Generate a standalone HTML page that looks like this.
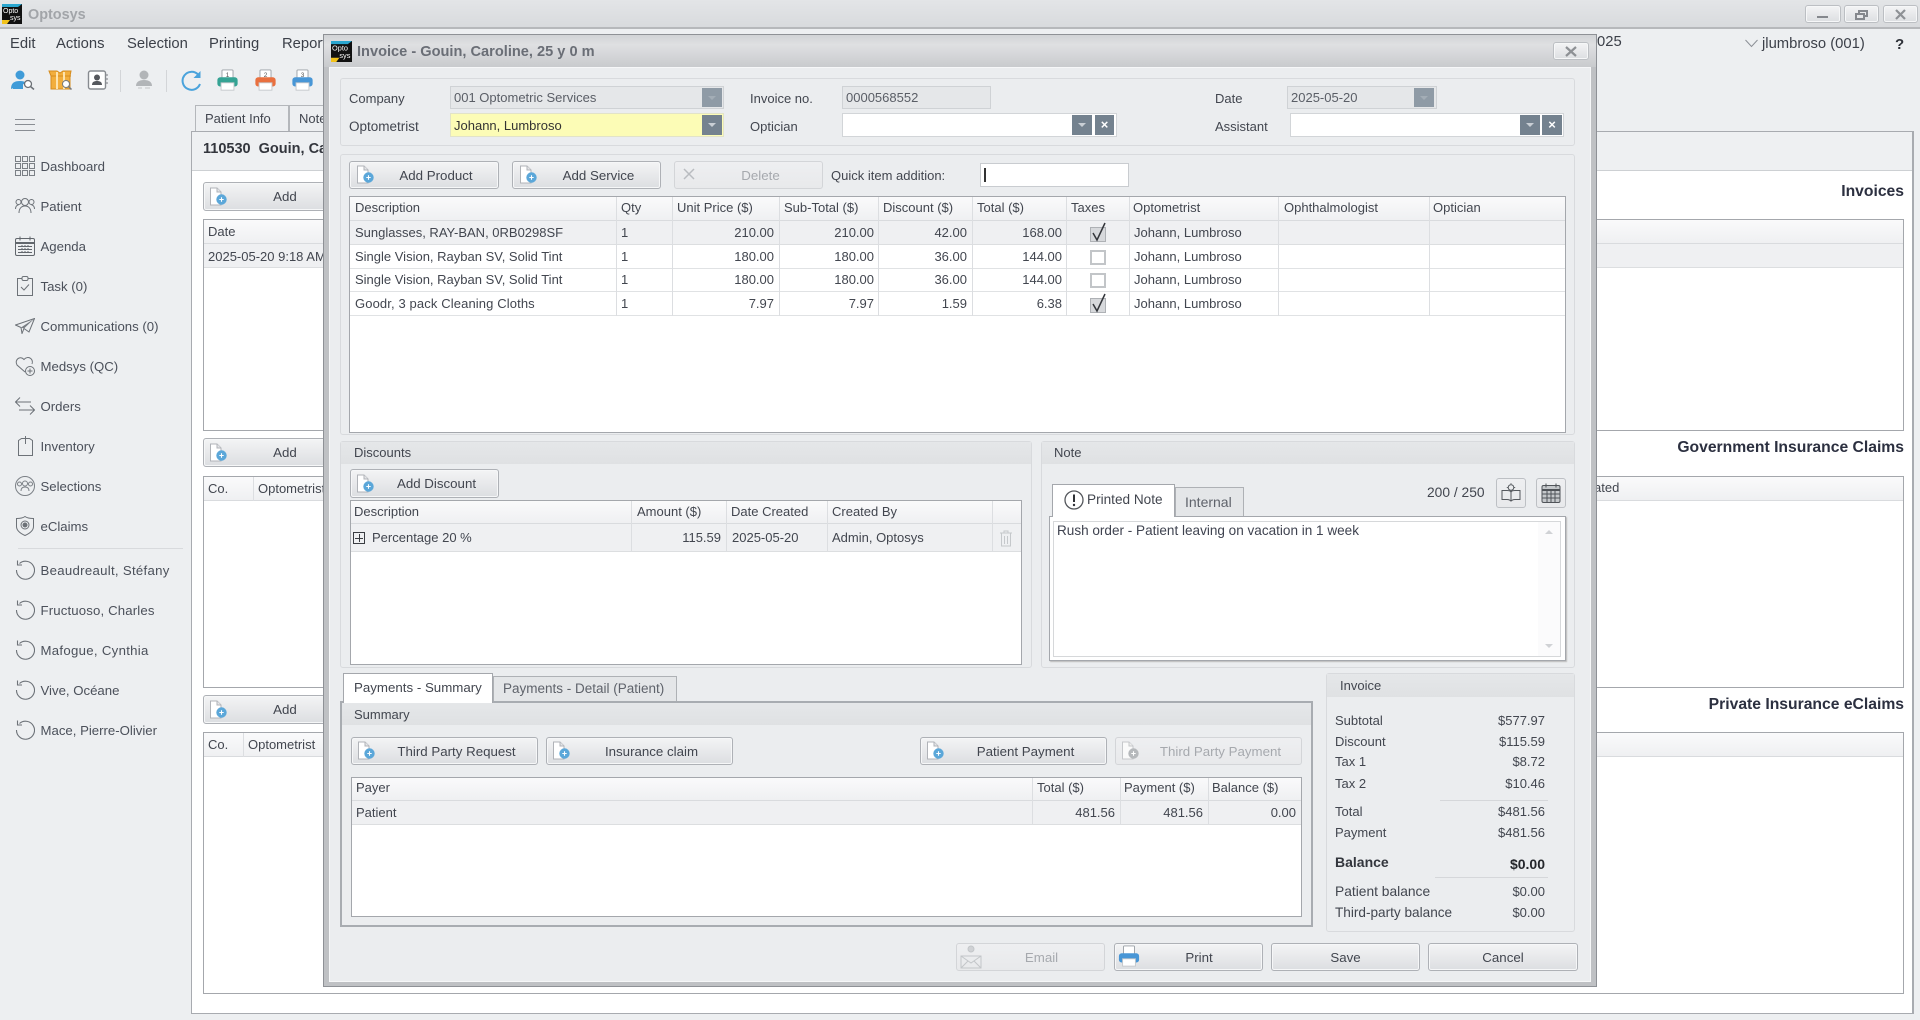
<!DOCTYPE html>
<html><head><meta charset="utf-8"><title>Optosys</title>
<style>
html,body{margin:0;padding:0;background:#edeff1}
#w{position:relative;width:1920px;height:1020px;overflow:hidden;background:#edeff1;font-family:"Liberation Sans",sans-serif;font-size:13px;color:#42464f;filter:blur(.35px)}
#w div,#w svg{position:absolute;box-sizing:border-box}
.t{white-space:nowrap;line-height:16px;height:16px}
.m{font-size:14.8px;color:#3c4049}
.n{font-size:13.2px;color:#4b505a;left:40.5px}
.b{background:linear-gradient(#f3f4f5,#e9eaec 45%,#dcdee1);border:1px solid #aeb1b6;border-radius:3px;box-shadow:inset 0 0 0 1px #f6f7f8;text-align:center;line-height:27px;font-size:13.3px;color:#42464f;padding-left:24px;white-space:nowrap}
.d{background:linear-gradient(#eeeff1,#e8e9eb);border:1px solid #d3d5d8;border-radius:3px;color:#a6a9ae;text-align:center;line-height:27px;font-size:13.3px;padding-left:24px;white-space:nowrap}
.wb{border-color:#bcbfc3;padding:0}
.g{background:#fff;border:1px solid #a4a7ac}
.h{background:linear-gradient(#fafafb,#eff0f2);border-bottom:1px solid #d9dbde}
.r{border-bottom:1px solid #e0e2e4;background:#fff}
.s{background:#eff0f2;border-bottom:1px solid #dcdee0}
.v{width:1px;background:#dcdee1}
.p{background:#ebedef;border:1px solid #d8dadd;border-radius:3px}
.k{background:linear-gradient(#e5e7e9,#dfe1e3)}
.f{background:#e5e7e9;border:1px solid #cfd2d5}
.w{background:#fff;border:1px solid #d2d5d8}
.q{background:#74828f}
.q2{background:#8f9ba6}
.lb{color:#42464f}
.x{color:#fff;font-size:13px;font-weight:bold;text-align:center;line-height:19px}
.ar{width:0;height:0;border-left:4px solid transparent;border-right:4px solid transparent;border-top:4px solid #c9cfd5}
.hd{font-size:15.7px;font-weight:bold;color:#2c3040;right:16px}
</style></head><body>
<svg width="0" height="0" style="position:absolute">
<defs>
<symbol id="add" viewBox="0 0 20 19"><path d="M2.500 1h6.500l4 4v13h-10.500z" fill="#fff" stroke="#b0b3b8"/><path d="M9 1v4h4" fill="#e4e5e7" stroke="#b0b3b8"/><circle cx="13.500" cy="12.500" r="5.200" fill="#5ba7d9"/><path d="M11.300 12.500h4.400M13.500 10.300v4.400" stroke="#fff" stroke-width="1.100"/></symbol>
<symbol id="addg" viewBox="0 0 20 19"><path d="M2.500 1h6.500l4 4v13h-10.500z" fill="#fafafa" stroke="#c6c8cb"/><path d="M9 1v4h4" fill="#eee" stroke="#c6c8cb"/><circle cx="13.500" cy="12.500" r="5.200" fill="#b5b8bb"/><path d="M11.300 12.500h4.400M13.500 10.300v4.400" stroke="#fff" stroke-width="1.100"/></symbol>
<symbol id="logo" viewBox="0 0 20 20"><rect width="20" height="20" fill="#111"/><path d="M0 0h20L16 3H0z" fill="#2aa6cf"/><path d="M0 16h8L5 20H0z" fill="#f2c21a"/><text x="1" y="9" font-size="7" fill="#fff" font-family="Liberation Sans">Opto</text><text x="8" y="16" font-size="7" fill="#fff" font-family="Liberation Sans">sys</text></symbol>
<symbol id="rec" viewBox="0 0 20 20"><path d="M4.500 3.500A9 9 0 1 1 1.500 10" fill="none" stroke="#6d7278" stroke-width="1.100"/><path d="M1.500 1.500v4.500h4.500" fill="none" stroke="#6d7278" stroke-width="1.100" transform="translate(1 -1)"/></symbol>
<symbol id="pr" viewBox="0 0 24 25"><rect x="6" y="1" width="12" height="10" rx="1" fill="#fff" stroke="#9aa0a6"/><rect x="1" y="9" width="22" height="10" rx="3" fill="currentColor"/><rect x="5" y="15" width="14" height="8" fill="#fff" stroke="#c5c8cb"/></symbol>
</defs>
</svg>
<div id="w">
<!-- title bar -->
<div style="left:0;top:0;width:1920px;height:29px;background:linear-gradient(#e3e5e7,#d8dadd);border-bottom:2px solid #b6b8bb"></div>
<svg style="left:2px;top:4px" width="20" height="20"><use href="#logo"/></svg>
<div class="t" style="left:28px;top:7px;font-weight:bold;font-size:14.4px;color:#a2a5a9">Optosys</div>
<div class="b wb" style="left:1805px;top:5px;width:36px;height:18px"></div><div style="left:1817px;top:16px;width:11px;height:2px;background:#85888d"></div>
<div class="b wb" style="left:1844px;top:5px;width:35px;height:18px"></div><div style="left:1858px;top:10px;width:10px;height:7px;border:2px solid #85888d"></div><div style="left:1855px;top:13px;width:10px;height:7px;border:2px solid #85888d;background:#e6e7e9"></div>
<div class="b wb" style="left:1883px;top:5px;width:35px;height:18px"></div>
<svg style="left:1895px;top:9px" width="11" height="11"><path d="M1 1l9 9M10 1l-9 9" stroke="#8e9195" stroke-width="2.200"/></svg>

<!-- menu -->
<div class="t m" style="left:10px;top:36px">Edit</div>
<div class="t m" style="left:56px;top:36px">Actions</div>
<div class="t m" style="left:127px;top:36px">Selection</div>
<div class="t m" style="left:209px;top:36px">Printing</div>
<div class="t m" style="left:282px;top:36px">Reports</div>
<div class="t m" style="left:1597px;top:34px">025</div>
<svg style="left:1745px;top:39px" width="13" height="9"><path d="M.5 1l6 6.500 6-6.500" fill="none" stroke="#8c9096"/></svg>
<div class="t m" style="left:1762px;top:36px">jlumbroso (001)</div>
<div class="t" style="left:1895px;top:37px;font-size:15px;font-weight:bold;color:#2e3138">?</div>

<!-- toolbar icons -->
<svg style="left:11px;top:70px" width="24" height="20" viewBox="0 0 24 20"><circle cx="9" cy="5" r="4.500" fill="#3f9bd8"/><path d="M0 19c0-6 3-8 9-8 3 0 5 .6 6.500 2" fill="#3f9bd8"/><path d="M2 19h10v-5H2z" fill="#3f9bd8"/><circle cx="17" cy="14" r="3.500" fill="#fff" stroke="#6b7076" stroke-width="1.300"/><path d="M19.500 16.500l3.500 3" stroke="#6b7076" stroke-width="1.500"/></svg>
<svg style="left:48px;top:70px" width="25" height="20" viewBox="0 0 25 20"><path d="M1 1h8l3 2 3-2h8l-1 5v13H3V6z" fill="#f2ae3c" stroke="#d58c1e"/><path d="M3 6h20" stroke="#d58c1e"/><path d="M9 2v17M16 2v17" stroke="#fde3ad" stroke-width="2"/><circle cx="18" cy="14" r="3.500" fill="#fff" stroke="#77797c"/><path d="M20.500 16.500l3 3" stroke="#77797c" stroke-width="1.500"/></svg>
<svg style="left:87px;top:70px" width="21" height="20" viewBox="0 0 21 20"><rect x="1.500" y="1" width="17" height="18" rx="2" fill="#fff" stroke="#878b90" stroke-width="1.400"/><circle cx="10" cy="7.500" r="3" fill="#55585d"/><path d="M5 15c0-3 2-4 5-4s5 1 5 4z" fill="#55585d"/><path d="M20 4v12" stroke="#9ea1a5" stroke-dasharray="2 2" stroke-width="1.500"/></svg>
<div class="v" style="left:120px;top:70px;height:22px;background:#d3d5d8"></div>
<svg style="left:135px;top:70px" width="18" height="20" viewBox="0 0 18 20"><circle cx="9" cy="5" r="4.500" fill="#b2b5b8"/><path d="M1 16c0-4 3-6 8-6s8 2 8 6z" fill="#b2b5b8"/><path d="M3 18h4M10 18h5" stroke="#c2c4c7"/></svg>
<div class="v" style="left:166px;top:70px;height:22px;background:#d3d5d8"></div>
<svg style="left:180px;top:70px" width="22" height="21" viewBox="0 0 22 21"><path d="M18 4.500A9 9 0 1 0 20 14" fill="none" stroke="#4aa3dc" stroke-width="2"/><path d="M20.500 1v7h-7z" fill="#4aa3dc"/></svg>
<svg style="left:216px;top:69px;color:#35a394" width="23" height="23"><use href="#pr"/><text x="11.500" y="8" font-size="6.500" text-anchor="middle" fill="#555" font-family="Liberation Sans">1</text></svg>
<svg style="left:254px;top:69px;color:#e9703f" width="23" height="23"><use href="#pr"/><text x="11.500" y="8" font-size="6.500" text-anchor="middle" fill="#555" font-family="Liberation Sans">2</text></svg>
<svg style="left:291px;top:69px;color:#4896d6" width="23" height="23"><use href="#pr"/><text x="11.500" y="8" font-size="6.500" text-anchor="middle" fill="#555" font-family="Liberation Sans">3</text></svg>

<!-- sidebar -->
<div style="left:15px;top:119px;width:20px;height:1px;background:#8a8e94"></div><div style="left:15px;top:124px;width:20px;height:1px;background:#8a8e94"></div><div style="left:15px;top:130px;width:20px;height:1px;background:#8a8e94"></div>
<svg style="left:15px;top:156px" width="20" height="20" viewBox="0 0 20 20" fill="none" stroke="#7b8086"><rect x=".5" y=".5" width="5" height="5"/><rect x="7.500" y=".5" width="5" height="5"/><rect x="14.500" y=".5" width="5" height="5"/><rect x=".5" y="7.500" width="5" height="5"/><rect x="7.500" y="7.500" width="5" height="5"/><rect x="14.500" y="7.500" width="5" height="5"/><rect x=".5" y="14.500" width="5" height="5"/><rect x="7.500" y="14.500" width="5" height="5"/><rect x="14.500" y="14.500" width="5" height="5"/></svg>
<div class="t n" style="top:159px">Dashboard</div>
<svg style="left:15px;top:197px" width="20" height="18" viewBox="0 0 20 18" fill="none" stroke="#6d7278"><circle cx="10" cy="5" r="3.500"/><circle cx="3.500" cy="5" r="2.500"/><circle cx="16.500" cy="5" r="2.500"/><path d="M4 16c0-4 2-7 6-7s6 3 6 7M.5 12c0-2 1-4 3-4M19.500 12c0-2-1-4-3-4"/></svg>
<div class="t n" style="top:199px">Patient</div>
<svg style="left:15px;top:236px" width="20" height="20" viewBox="0 0 20 20" fill="none" stroke="#61666c"><rect x=".5" y="2.500" width="19" height="17" rx="1.500"/><path d="M.5 7h19" stroke-width="2"/><path d="M5 .5v4M15 .5v4M3 10.500h14M3 13.500h14M3 16.500h14" /><path d="M7 9v9M10 9v9M13 9v9" stroke-dasharray="2 1"/></svg>
<div class="t n" style="top:239px">Agenda</div>
<svg style="left:17px;top:276px" width="16" height="20" viewBox="0 0 16 20" fill="none" stroke="#6d7278"><path d="M5 2.500H.5v17h15v-17H11"/><rect x="5" y=".5" width="6" height="4" rx="1.500"/><path d="M4 11l3 3 5-5.500"/></svg>
<div class="t n" style="top:279px">Task (0)</div>
<svg style="left:15px;top:318px" width="20" height="16" viewBox="0 0 20 16" fill="#787d83"><path d="M.5 7L19.500.5 14 14 9 10.500 7 15.500 6 9.500z" fill="none" stroke="#6d7278"/><path d="M6 9.500L19.500.5 9 10.500z"/></svg>
<div class="t n" style="top:319px">Communications (0)</div>
<svg style="left:15px;top:356px" width="20" height="20" viewBox="0 0 20 20" fill="none" stroke="#6d7278"><path d="M10 16L2 9C-1 4 5-1 9 3.500 13-1 19 3 17 8"/><circle cx="15" cy="15" r="4.500" fill="#edeff1"/><path d="M12.500 15h5M15 12.500v5"/></svg>
<div class="t n" style="top:359px">Medsys (QC)</div>
<svg style="left:15px;top:397px" width="20" height="18" viewBox="0 0 20 18" fill="none" stroke="#6d7278"><path d="M5 .5L.5 5 5 9.500M1 5h15M15 8.500l4.500 4.500-4.500 4.500M19 13H4"/></svg>
<div class="t n" style="top:399px">Orders</div>
<svg style="left:18px;top:436px" width="15" height="20" viewBox="0 0 15 20" fill="none" stroke="#6d7278"><path d="M.5 4.500l3-2h8l3 2v15H.5z"/><path d="M7.500 0v8" /></svg>
<div class="t n" style="top:439px">Inventory</div>
<svg style="left:15px;top:476px" width="20" height="20" viewBox="0 0 20 20" fill="none" stroke="#7b8086"><circle cx="10" cy="10" r="9.500"/><circle cx="10" cy="7.500" r="2.500"/><circle cx="4.500" cy="8" r="2"/><circle cx="15.500" cy="8" r="2"/><path d="M6 15c0-3 2-4 4-4s4 1 4 4"/></svg>
<div class="t n" style="top:479px">Selections</div>
<svg style="left:16px;top:516px" width="18" height="20" viewBox="0 0 18 20" fill="none" stroke="#6d7278"><path d="M9 .5c2 1.500 5 2 8.500 2v8c0 4-4 7-8.500 9-4.500-2-8.500-5-8.500-9v-8C4 2.500 7 2 9 .5z"/><circle cx="9" cy="9" r="4"/><circle cx="9" cy="9" r="2" fill="#6d7278"/></svg>
<div class="t n" style="top:519px">eClaims</div>
<div style="left:18px;top:548px;width:165px;height:1px;background:#d8dadd"></div>
<svg style="left:15px;top:560px" width="20" height="20"><use href="#rec"/></svg><div class="t n" style="top:563px;letter-spacing:.3px">Beaudreault, Stéfany</div>
<svg style="left:15px;top:600px" width="20" height="20"><use href="#rec"/></svg><div class="t n" style="top:603px;letter-spacing:.15px">Fructuoso, Charles</div>
<svg style="left:15px;top:640px" width="20" height="20"><use href="#rec"/></svg><div class="t n" style="top:643px;letter-spacing:.3px">Mafogue, Cynthia</div>
<svg style="left:15px;top:680px" width="20" height="20"><use href="#rec"/></svg><div class="t n" style="top:683px">Vive, Océane</div>
<svg style="left:15px;top:720px" width="20" height="20"><use href="#rec"/></svg><div class="t n" style="top:723px">Mace, Pierre-Olivier</div>

<!-- background patient panel -->
<div style="left:195px;top:105px;width:94px;height:26px;background:#edeff1;border:1px solid #b4b7bb;border-bottom:none"></div>
<div class="t lb" style="left:205px;top:111px">Patient Info</div>
<div style="left:289px;top:105px;width:60px;height:26px;background:#edeff1;border:1px solid #b4b7bb;border-bottom:none"></div>
<div class="t lb" style="left:299px;top:111px">Notes</div>
<div style="left:191px;top:131px;width:1723px;height:883px;background:#fff;border:1px solid #a8abb0;border-right-width:2px"></div>
<div style="left:192px;top:132px;width:1720px;height:39px;background:#eef0f2;border-bottom:1px solid #cdd0d3"></div>
<div class="t" style="left:203px;top:141px;font-size:14.5px;font-weight:bold;color:#33363d">110530&nbsp; Gouin, Caroline</div>
<div class="t hd" style="top:184px">Invoices</div>
<div class="t hd" style="top:440px">Government Insurance Claims</div>
<div class="t hd" style="top:697px">Private Insurance eClaims</div>

<div class="b" style="left:203px;top:182px;width:140px;height:29px">Add</div>
<svg style="left:208px;top:187px" width="20" height="19"><use href="#add"/></svg>
<div class="g" style="left:203px;top:219px;width:1701px;height:212px"></div>
<div class="h" style="left:204px;top:220px;width:1699px;height:24px"></div>
<div class="s" style="left:204px;top:244px;width:1699px;height:24px"></div>
<div class="t lb" style="left:208px;top:224px">Date</div>
<div class="t lb" style="left:208px;top:249px">2025-05-20 9:18 AM</div>

<div class="b" style="left:203px;top:438px;width:140px;height:29px">Add</div>
<svg style="left:208px;top:443px" width="20" height="19"><use href="#add"/></svg>
<div class="g" style="left:203px;top:476px;width:1701px;height:212px"></div>
<div class="h" style="left:204px;top:477px;width:1699px;height:24px"></div>
<div class="v" style="left:253px;top:477px;height:24px"></div>
<div class="t lb" style="left:208px;top:481px">Co.</div>
<div class="t lb" style="left:258px;top:481px">Optometrist</div>
<div class="t lb" style="left:1542px;top:480px">Date Created</div>

<div class="b" style="left:203px;top:695px;width:140px;height:29px">Add</div>
<svg style="left:208px;top:700px" width="20" height="19"><use href="#add"/></svg>
<div class="g" style="left:203px;top:732px;width:1701px;height:262px"></div>
<div class="h" style="left:204px;top:733px;width:1699px;height:24px"></div>
<div class="v" style="left:243px;top:733px;height:24px"></div>
<div class="t lb" style="left:208px;top:737px">Co.</div>
<div class="t lb" style="left:248px;top:737px">Optometrist</div>

<!-- DIALOG -->
<div style="left:323px;top:34px;width:1274px;height:953px;background:#bfc1c4;border:1px solid #8e9196"></div>
<div style="left:324px;top:35px;width:1272px;height:32px;background:linear-gradient(#d1d3d6,#dfe0e2 30%,#c8cacd)"></div>
<div style="left:329px;top:67px;width:1262px;height:915px;background:#ebedef;border:1px solid #f6f7f8"></div>
<svg style="left:331px;top:41px" width="21" height="21"><use href="#logo"/></svg>
<div class="t" style="left:357px;top:44px;font-size:14.6px;font-weight:bold;color:#6a6e76">Invoice - Gouin, Caroline, 25 y 0 m</div>
<div class="b wb" style="left:1553px;top:42px;width:36px;height:18px"></div>
<svg style="left:1565px;top:46px" width="12" height="11"><path d="M1 1l10 9M11 1l-10 9" stroke="#8e9195" stroke-width="2.200"/></svg>

<!-- top group -->
<div class="p" style="left:340px;top:78px;width:1235px;height:68px"></div>
<div class="t lb" style="left:349px;top:91px">Company</div>
<div class="t lb" style="left:349px;top:119px;font-size:13.5px">Optometrist</div>
<div class="f" style="left:450px;top:86px;width:274px;height:23px"></div>
<div class="t" style="left:454px;top:90px;color:#5a5e66">001 Optometric Services</div>
<div class="q2" style="left:702px;top:88px;width:20px;height:19px"></div>
<div class="ar" style="left:708px;top:96px;border-top-color:#a3adb6"></div>
<div style="left:450px;top:113px;width:274px;height:24px;background:#fcfcb6;border:1px solid #e2e3c8"></div>
<div class="t" style="left:454px;top:118px;color:#333">Johann, Lumbroso</div>
<div class="q" style="left:702px;top:115px;width:20px;height:20px"></div>
<div class="ar" style="left:708px;top:123px"></div>

<div class="t lb" style="left:750px;top:91px">Invoice no.</div>
<div class="t lb" style="left:750px;top:119px">Optician</div>
<div class="f" style="left:842px;top:86px;width:149px;height:23px"></div>
<div class="t" style="left:846px;top:90px;color:#5a5e66">0000568552</div>
<div class="w" style="left:842px;top:113px;width:275px;height:24px"></div>
<div class="q" style="left:1072px;top:115px;width:20px;height:20px"></div><div class="ar" style="left:1078px;top:123px"></div>
<div class="q x" style="left:1095px;top:115px;width:19px;height:20px">×</div>

<div class="t lb" style="left:1215px;top:91px">Date</div>
<div class="t lb" style="left:1215px;top:119px">Assistant</div>
<div class="f" style="left:1287px;top:86px;width:150px;height:23px"></div>
<div class="t" style="left:1291px;top:90px;color:#5a5e66">2025-05-20</div>
<div class="q2" style="left:1414px;top:88px;width:20px;height:19px"></div><div class="ar" style="left:1420px;top:96px;border-top-color:#a3adb6"></div>
<div class="w" style="left:1290px;top:113px;width:274px;height:24px"></div>
<div class="q" style="left:1520px;top:115px;width:20px;height:20px"></div><div class="ar" style="left:1526px;top:123px"></div>
<div class="q x" style="left:1542px;top:115px;width:20px;height:20px">×</div>

<!-- items group -->
<div class="p" style="left:340px;top:154px;width:1235px;height:281px"></div>
<div class="b" style="left:349px;top:161px;width:150px;height:28px">Add Product</div>
<svg style="left:355px;top:165px" width="20" height="19"><use href="#add"/></svg>
<div class="b" style="left:512px;top:161px;width:149px;height:28px">Add Service</div>
<svg style="left:518px;top:165px" width="20" height="19"><use href="#add"/></svg>
<div class="d" style="left:674px;top:161px;width:149px;height:28px">Delete</div>
<svg style="left:683px;top:168px" width="12" height="12"><path d="M1 1l10 10M11 1L1 11" stroke="#b9bcc0" stroke-width="1.500"/></svg>
<div class="t lb" style="left:831px;top:168px">Quick item addition:</div>
<div class="w" style="left:980px;top:163px;width:149px;height:24px;border-color:#c9ccd0"></div>
<div style="left:984px;top:168px;width:2px;height:14px;background:#333"></div>

<div class="g" style="left:349px;top:196px;width:1217px;height:237px"></div>
<div class="h" style="left:350px;top:197px;width:1215px;height:24px"></div>
<div class="s" style="left:350px;top:221px;width:1215px;height:24px"></div>
<div class="r" style="left:350px;top:245px;width:1215px;height:24px"></div>
<div class="r" style="left:350px;top:269px;width:1215px;height:23px"></div>
<div class="r" style="left:350px;top:292px;width:1215px;height:24px"></div>
<div class="v" style="left:616px;top:197px;height:119px"></div>
<div class="v" style="left:672px;top:197px;height:119px"></div>
<div class="v" style="left:779px;top:197px;height:119px"></div>
<div class="v" style="left:878px;top:197px;height:119px"></div>
<div class="v" style="left:972px;top:197px;height:119px"></div>
<div class="v" style="left:1066px;top:197px;height:119px"></div>
<div class="v" style="left:1129px;top:197px;height:119px"></div>
<div class="v" style="left:1278px;top:197px;height:119px"></div>
<div class="v" style="left:1429px;top:197px;height:119px"></div>
<div class="t lb" style="left:355px;top:200px">Description</div>
<div class="t lb" style="left:621px;top:200px">Qty</div>
<div class="t lb" style="left:677px;top:200px">Unit Price ($)</div>
<div class="t lb" style="left:784px;top:200px">Sub-Total ($)</div>
<div class="t lb" style="left:883px;top:200px">Discount ($)</div>
<div class="t lb" style="left:977px;top:200px">Total ($)</div>
<div class="t lb" style="left:1071px;top:200px">Taxes</div>
<div class="t lb" style="left:1133px;top:200px">Optometrist</div>
<div class="t lb" style="left:1284px;top:200px">Ophthalmologist</div>
<div class="t lb" style="left:1433px;top:200px">Optician</div>

<div class="t lb" style="left:355px;top:225px">Sunglasses, RAY-BAN, 0RB0298SF</div><div class="t lb" style="left:621px;top:225px">1</div>
<div class="t lb" style="right:1146px;top:225px">210.00</div><div class="t lb" style="right:1046px;top:225px">210.00</div><div class="t lb" style="right:953px;top:225px">42.00</div><div class="t lb" style="right:858px;top:225px">168.00</div><div class="t lb" style="left:1134px;top:225px">Johann, Lumbroso</div>
<div class="t lb" style="left:355px;top:249px">Single Vision, Rayban SV, Solid Tint</div><div class="t lb" style="left:621px;top:249px">1</div>
<div class="t lb" style="right:1146px;top:249px">180.00</div><div class="t lb" style="right:1046px;top:249px">180.00</div><div class="t lb" style="right:953px;top:249px">36.00</div><div class="t lb" style="right:858px;top:249px">144.00</div><div class="t lb" style="left:1134px;top:249px">Johann, Lumbroso</div>
<div class="t lb" style="left:355px;top:272px">Single Vision, Rayban SV, Solid Tint</div><div class="t lb" style="left:621px;top:272px">1</div>
<div class="t lb" style="right:1146px;top:272px">180.00</div><div class="t lb" style="right:1046px;top:272px">180.00</div><div class="t lb" style="right:953px;top:272px">36.00</div><div class="t lb" style="right:858px;top:272px">144.00</div><div class="t lb" style="left:1134px;top:272px">Johann, Lumbroso</div>
<div class="t lb" style="left:355px;top:296px;letter-spacing:.12px">Goodr, 3 pack Cleaning Cloths</div><div class="t lb" style="left:621px;top:296px">1</div>
<div class="t lb" style="right:1146px;top:296px">7.97</div><div class="t lb" style="right:1046px;top:296px">7.97</div><div class="t lb" style="right:953px;top:296px">1.59</div><div class="t lb" style="right:858px;top:296px">6.38</div><div class="t lb" style="left:1134px;top:296px">Johann, Lumbroso</div>

<div style="left:1090px;top:227px;width:16px;height:15px;background:#d7d9dc;border:1px solid #aeb1b5"></div>
<svg style="left:1091px;top:222px" width="17" height="20"><path d="M2 11l4 7L14 1" fill="none" stroke="#33363b" stroke-width="1.500"/></svg>
<div style="left:1090px;top:250px;width:16px;height:15px;background:#fff;border:2px solid #c2c5c8"></div>
<div style="left:1090px;top:273px;width:16px;height:15px;background:#fff;border:2px solid #c2c5c8"></div>
<div style="left:1090px;top:298px;width:16px;height:15px;background:#d7d9dc;border:1px solid #aeb1b5"></div>
<svg style="left:1091px;top:293px" width="17" height="20"><path d="M2 11l4 7L14 1" fill="none" stroke="#33363b" stroke-width="1.500"/></svg>

<!-- Discounts -->
<div class="p" style="left:340px;top:441px;width:692px;height:227px"></div>
<div class="k" style="left:341px;top:442px;width:690px;height:22px"></div>
<div class="t lb" style="left:354px;top:445px">Discounts</div>
<div class="b" style="left:350px;top:469px;width:149px;height:29px">Add Discount</div>
<svg style="left:355px;top:474px" width="20" height="19"><use href="#add"/></svg>
<div class="g" style="left:350px;top:500px;width:672px;height:165px"></div>
<div class="h" style="left:351px;top:501px;width:670px;height:23px"></div>
<div class="s" style="left:351px;top:524px;width:670px;height:28px"></div>
<div class="v" style="left:631px;top:501px;height:51px"></div>
<div class="v" style="left:726px;top:501px;height:51px"></div>
<div class="v" style="left:827px;top:501px;height:51px"></div>
<div class="v" style="left:992px;top:501px;height:51px"></div>
<div class="t lb" style="left:354px;top:504px">Description</div>
<div class="t lb" style="left:637px;top:504px">Amount ($)</div>
<div class="t lb" style="left:731px;top:504px">Date Created</div>
<div class="t lb" style="left:832px;top:504px">Created By</div>
<div style="left:353px;top:532px;width:12px;height:12px;border:1px solid #3a3d42"></div>
<div style="left:355px;top:537.500px;width:8px;height:1px;background:#3a3d42"></div><div style="left:358.500px;top:534px;width:1px;height:8px;background:#3a3d42"></div>
<div class="t lb" style="left:372px;top:530px">Percentage 20 %</div>
<div class="t lb" style="right:1199px;top:530px">115.59</div>
<div class="t lb" style="left:732px;top:530px">2025-05-20</div>
<div class="t lb" style="left:832px;top:530px">Admin, Optosys</div>
<svg style="left:999px;top:530px" width="14" height="17" viewBox="0 0 14 17" fill="none" stroke="#c5c8cb"><path d="M1 3h12M5 3V1h4v2M2.500 3v13h9V3M5.500 6v8M8.500 6v8"/></svg>

<!-- Note -->
<div class="p" style="left:1041px;top:441px;width:534px;height:227px"></div>
<div class="k" style="left:1042px;top:442px;width:532px;height:22px"></div>
<div class="t lb" style="left:1054px;top:445px">Note</div>
<div style="left:1175px;top:487px;width:69px;height:30px;background:#e4e6e8;border:1px solid #aeb1b5"></div>
<div class="t" style="left:1185px;top:494px;font-size:14px;color:#5f636b">Internal</div>
<div style="left:1049px;top:516px;width:517px;height:145px;background:#fff;border:1px solid #a4a7ac;box-shadow:1px 1px 1px #bbb"></div>
<div style="left:1053px;top:521px;width:508px;height:136px;background:#fff;border:1px solid #d6d8da"></div>
<div style="left:1538px;top:522px;width:22px;height:134px;background:#fbfbfc"></div>
<div class="ar" style="left:1545px;top:530px;border-top:none;border-bottom:4px solid #d0d2d5"></div>
<div class="ar" style="left:1545px;top:644px;border-top-color:#d0d2d5"></div>
<div style="left:1052px;top:484px;width:123px;height:33px;background:#fff;border:1px solid #a4a7ac;border-bottom:none"></div>
<svg style="left:1064px;top:490px" width="20" height="20"><circle cx="10" cy="10" r="9" fill="#fff" stroke="#55585d" stroke-width="1.300"/><path d="M10 4.500v7.500" stroke="#2e3035" stroke-width="2"/><circle cx="10" cy="15" r="1.200" fill="#2e3035"/></svg>
<div class="t lb" style="left:1087px;top:492px;font-size:13.6px">Printed Note</div>
<div class="t lb" style="left:1427px;top:485px;font-size:13.8px">200 / 250</div>
<div class="d" style="left:1496px;top:478px;width:30px;height:30px;padding:0;border-color:#bdc0c4"></div>
<svg style="left:1501px;top:483px" width="20" height="20" viewBox="0 0 20 20" fill="none" stroke="#55595e"><path d="M1 7.500h5c2 0 4 .7 4 2v9c0-1-2-2-4-2H1zM19 7.500h-5c-2 0-4 .7-4 2v9c0-1 2-2 4-2h5z"/><circle cx="10" cy="4.500" r="2.800"/><path d="M10 7.500v2M10 .3v1M5.800 4.500h1M13.200 4.500h1"/></svg>
<div class="d" style="left:1536px;top:478px;width:30px;height:30px;padding:0;border-color:#bdc0c4"></div>
<svg style="left:1541px;top:483px" width="20" height="20" viewBox="0 0 20 20" fill="none" stroke="#505459"><rect x="1" y="2.500" width="18" height="17" rx="1.500" fill="#c5c8cb"/><path d="M1 7h18" stroke-width="2"/><path d="M5 .5v4M15 .5v4M1 11h18M1 15h18M6 7v12M10 7v12M14 7v12"/></svg>
<div class="t" style="left:1057px;top:523px;font-size:13.55px;color:#3f4350">Rush order - Patient leaving on vacation in 1 week</div>

<!-- Payments -->
<div style="left:493px;top:676px;width:184px;height:26px;background:#e4e6e8;border:1px solid #aeb1b5"></div>
<div class="t" style="left:503px;top:681px;font-size:13.5px;color:#5f636b">Payments - Detail (Patient)</div>
<div style="left:340px;top:701px;width:973px;height:226px;background:#ebedef;border:2px solid #a8acb1"></div>
<div class="k" style="left:342px;top:703px;width:969px;height:22px"></div>
<div style="left:343px;top:673px;width:150px;height:30px;background:#fff;border:1px solid #a4a7ac;border-bottom:none"></div>
<div class="t lb" style="left:354px;top:680px;font-size:13.3px">Payments - Summary</div>
<div class="t lb" style="left:354px;top:707px">Summary</div>
<div class="b" style="left:351px;top:737px;width:187px;height:28px">Third Party Request</div>
<svg style="left:356px;top:741px" width="20" height="19"><use href="#add"/></svg>
<div class="b" style="left:546px;top:737px;width:187px;height:28px">Insurance claim</div>
<svg style="left:551px;top:741px" width="20" height="19"><use href="#add"/></svg>
<div class="b" style="left:920px;top:737px;width:187px;height:28px">Patient Payment</div>
<svg style="left:925px;top:741px" width="20" height="19"><use href="#add"/></svg>
<div class="d" style="left:1115px;top:737px;width:187px;height:28px">Third Party Payment</div>
<svg style="left:1120px;top:741px" width="20" height="19"><use href="#addg"/></svg>
<div class="g" style="left:351px;top:777px;width:951px;height:140px"></div>
<div class="h" style="left:352px;top:778px;width:949px;height:23px"></div>
<div class="s" style="left:352px;top:801px;width:949px;height:24px"></div>
<div class="v" style="left:1032px;top:778px;height:47px"></div>
<div class="v" style="left:1120px;top:778px;height:47px"></div>
<div class="v" style="left:1208px;top:778px;height:47px"></div>
<div class="t lb" style="left:356px;top:780px">Payer</div>
<div class="t lb" style="left:1037px;top:780px">Total ($)</div>
<div class="t lb" style="left:1124px;top:780px">Payment ($)</div>
<div class="t lb" style="left:1212px;top:780px">Balance ($)</div>
<div class="t lb" style="left:356px;top:805px">Patient</div>
<div class="t lb" style="right:805px;top:805px">481.56</div>
<div class="t lb" style="right:717px;top:805px">481.56</div>
<div class="t lb" style="right:624px;top:805px">0.00</div>

<!-- Invoice summary -->
<div class="p" style="left:1326px;top:673px;width:249px;height:259px"></div>
<div class="k" style="left:1327px;top:674px;width:247px;height:23px"></div>
<div class="t lb" style="left:1340px;top:678px">Invoice</div>
<div class="t lb" style="left:1335px;top:713px">Subtotal</div><div class="t lb" style="right:375px;top:713px">$577.97</div>
<div class="t lb" style="left:1335px;top:734px">Discount</div><div class="t lb" style="right:375px;top:734px">$115.59</div>
<div class="t lb" style="left:1335px;top:754px">Tax 1</div><div class="t lb" style="right:375px;top:754px">$8.72</div>
<div class="t lb" style="left:1335px;top:776px">Tax 2</div><div class="t lb" style="right:375px;top:776px">$10.46</div>
<div style="left:1440px;top:800px;width:108px;height:1px;background:#d5d7da"></div>
<div class="t lb" style="left:1335px;top:804px">Total</div><div class="t lb" style="right:375px;top:804px">$481.56</div>
<div class="t lb" style="left:1335px;top:825px">Payment</div><div class="t lb" style="right:375px;top:825px">$481.56</div>
<div class="t" style="left:1335px;top:854px;font-size:14px;font-weight:bold;color:#33363d">Balance</div><div class="t" style="right:375px;top:856px;font-weight:bold;font-size:14px;color:#25272c">$0.00</div>
<div style="left:1435px;top:877px;width:113px;height:1px;background:#d5d7da"></div>
<div class="t lb" style="left:1335px;top:884px;font-size:13.8px">Patient balance</div><div class="t lb" style="right:375px;top:884px">$0.00</div>
<div class="t lb" style="left:1335px;top:905px;font-size:13.6px">Third-party balance</div><div class="t lb" style="right:375px;top:905px">$0.00</div>

<!-- Footer -->
<div class="d" style="left:956px;top:943px;width:149px;height:28px;padding-left:22px">Email</div>
<svg style="left:960px;top:945px" width="22" height="24" viewBox="0 0 22 24" fill="none" stroke="#c3c6c9"><circle cx="11" cy="4" r="3" fill="#d0d2d5"/><path d="M1 11h20v12H1zM1 11l10 7 10-7M1 23l7-7M21 23l-7-7"/></svg>
<div class="b" style="left:1114px;top:943px;width:149px;height:28px;padding-left:21px">Print</div>
<svg style="left:1118px;top:945px;color:#4896d6" width="22" height="23"><use href="#pr"/></svg>
<div class="b" style="left:1271px;top:943px;width:149px;height:28px;padding:0">Save</div>
<div class="b" style="left:1428px;top:943px;width:150px;height:28px;padding:0">Cancel</div>
</div>
</body></html>
